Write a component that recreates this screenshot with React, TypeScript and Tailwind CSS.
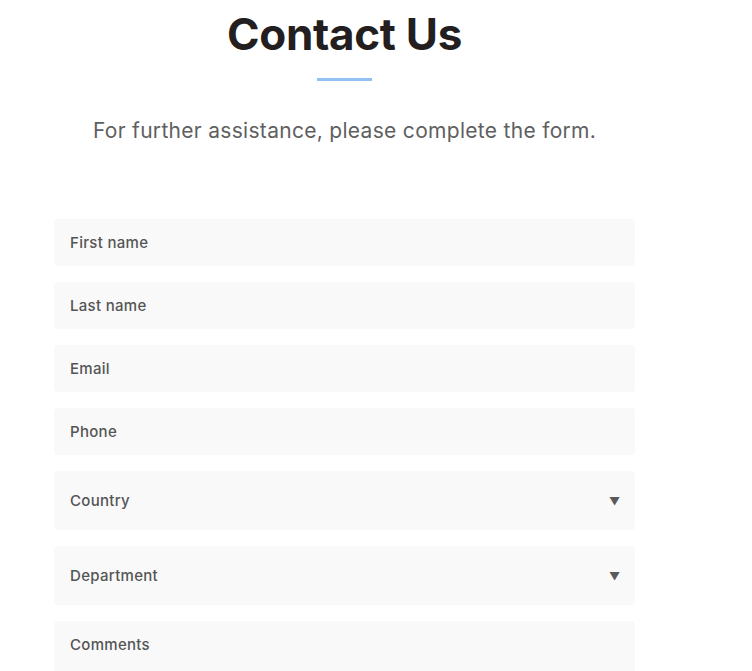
import React from 'react';

const fields = ['First name', 'Last name', 'Email', 'Phone'];
const selects = ['Country', 'Department'];

export default function App() {
  return (
    <div className="min-h-screen bg-white font-['Inter',sans-serif] overflow-hidden">
      <div className="w-[689px] flex flex-col items-center">
        <h1 className="mt-[8px] text-[44px] leading-[52px] font-bold text-[#231f20] tracking-[-0.3px]">Contact Us</h1>
        <div className="mt-[18px] w-[55px] h-[3px] bg-[#90c3f3]" />
        <p className="mt-[36px] text-[21px] leading-[28px] tracking-[0.3px] text-[#5f5f5f]">
          For further assistance, please complete the form.
        </p>
      </div>
      <form className="mt-[74px] ml-[54px] w-[581px] flex flex-col gap-4">
        {fields.map((f) => (
          <div key={f} className="h-[47px] rounded-[4px] bg-[#f9f9f9] px-4 pt-[2px] flex items-center">
            <span className="text-[15px] tracking-[0.3px] font-medium text-[#555555]">{f}</span>
          </div>
        ))}
        {selects.map((s) => (
          <div key={s} className="h-[59px] rounded-[4px] bg-[#f9f9f9] pl-4 pr-[15px] pt-[2px] flex items-center justify-between">
            <span className="text-[15px] tracking-[0.3px] font-medium text-[#555555]">{s}</span>
            <span className="text-[11px] text-[#5a5a5a]">▼</span>
          </div>
        ))}
        <div className="h-[90px] rounded-[4px] bg-[#f9f9f9] px-4 pt-[11px]">
          <span className="text-[15px] tracking-[0.3px] font-medium text-[#555555]">Comments</span>
        </div>
      </form>
    </div>
  );
}
